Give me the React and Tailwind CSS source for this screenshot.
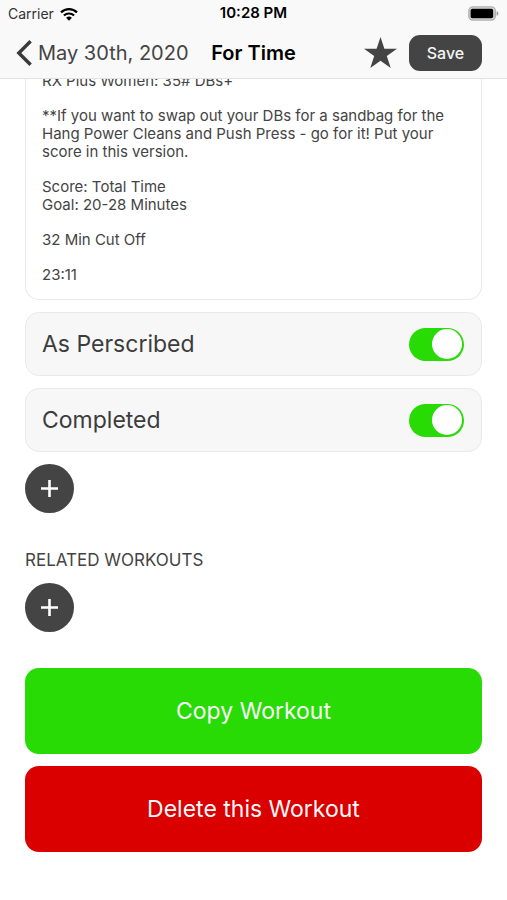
import { useState } from "react";

function WifiIcon() {
  return (
    <svg viewBox="0 0 18 14" className="h-[14px] w-[18px]" fill="none" aria-hidden="true">
      <path d="M1 5.4a11.6 11.6 0 0 1 16 0" stroke="#000" strokeWidth="2.2" />
      <path d="M3.9 8.5a7.4 7.4 0 0 1 10.2 0" stroke="#000" strokeWidth="2.1" />
      <path d="M6.1 10.8a4.2 4.2 0 0 1 5.8 0L9 13.8z" fill="#000" />
    </svg>
  );
}

function BatteryIcon() {
  return (
    <svg viewBox="0 0 31 15" className="h-[15px] w-[31px]" aria-hidden="true">
      <rect x="0.9" y="0.9" width="26.4" height="13.2" rx="4" fill="#d8d8d8" stroke="#b0b0b0" strokeWidth="1.4" />
      <rect x="2.6" y="2.8" width="22.6" height="9.4" rx="1.8" fill="#000" />
      <path d="M28.6 5.2c1.1.3 1.8 1.2 1.8 2.3s-.7 2-1.8 2.3z" fill="#9a9a9a" />
    </svg>
  );
}

function ToggleRow({ label, checked, onChange }) {
  return (
    <label className="flex h-16 items-center justify-between rounded-[14px] border border-[#e9e9e9] bg-[#f7f7f7] px-4 text-[23px] text-[#3c3c3c]">
      {label}
      <input
        type="checkbox"
        role="switch"
        checked={checked}
        onChange={(e) => onChange(e.target.checked)}
        className="mr-px flex h-[33px] w-[55px] appearance-none items-center rounded-full bg-[#d8d8d8] px-0.5 before:size-[30px] before:rounded-full before:bg-white checked:justify-end checked:bg-[#28db04]"
      />
    </label>
  );
}

function AddButton({ label }) {
  return (
    <button type="button" aria-label={label} className="flex size-[49px] items-center justify-center rounded-full bg-[#444]">
      <svg viewBox="0 0 17 17" className="size-[17px]" stroke="#fff" strokeWidth="2.6" aria-hidden="true">
        <path d="M8.5 0v17M0 8.5h17" />
      </svg>
    </button>
  );
}

const notes = [
  "RX Plus Women: 35# DBs+",
  "**If you want to swap out your DBs for a sandbag for the Hang Power Cleans and Push Press - go for it! Put your score in this version.",
  "Score: Total Time\nGoal: 20-28 Minutes",
  "32 Min Cut Off",
  "23:11",
];

export default function App() {
  const [prescribed, setPrescribed] = useState(true);
  const [completed, setCompleted] = useState(true);

  return (
    <div className="min-h-screen bg-white font-['Inter',sans-serif] text-[#444]">
      <header className="sticky top-0 z-10 border-b border-[#e2e2e2] bg-[#f9f9f9]">
        <div className="grid h-[27px] grid-cols-[1fr_auto_1fr] items-center px-2 text-black">
          <div className="flex items-center gap-1.5 text-sm text-[#333]">
            Carrier
            <WifiIcon />
          </div>
          <span className="text-[15px] font-semibold">10:28 PM</span>
          <div className="flex justify-end">
            <BatteryIcon />
          </div>
        </div>

        <nav className="grid h-[51px] grid-cols-[1fr_auto_1fr] items-center px-4">
          <a href="#workouts" className="flex items-center gap-1.5 text-xl whitespace-nowrap">
            <svg viewBox="0 0 16 26" className="h-[26px] w-4" fill="none" stroke="#3a3a3a" strokeWidth="3.4" aria-hidden="true">
              <path d="M14.6 1.2 2.8 13l11.8 11.8" />
            </svg>
            May 30th, 2020
          </a>
          <h1 className="text-xl font-semibold text-black">For Time</h1>
          <div className="flex items-center justify-end gap-3 pr-[9px]">
            <button type="button" aria-label="Favorite">
              <svg viewBox="0 0 33 31" className="h-[31px] w-[33px]" fill="#444" aria-hidden="true">
                <path d="M16.5 0l3.9 11.8H33l-10.2 7.3L26.7 31l-10.2-7.3L6.3 31l3.9-11.9L0 11.8h12.6z" />
              </svg>
            </button>
            <button type="button" className="h-9 w-[73px] rounded-[11px] bg-[#444] text-base font-medium text-[#f5f5f5]">
              Save
            </button>
          </div>
        </nav>
      </header>

      <main className="px-[25px]">
        {/* the card keeps scrolling up underneath the header */}
        <section className="-mt-2 flex flex-col gap-[17px] rounded-b-[14px] border border-t-0 border-[#e9e9e9] px-4 pt-px pb-[15px] text-[15px] leading-[18px]">
          {notes.map((note) => (
            <p key={note} className="whitespace-pre-line">
              {note}
            </p>
          ))}
        </section>

        <div className="mt-3 flex flex-col gap-3">
          <ToggleRow label="As Perscribed" checked={prescribed} onChange={setPrescribed} />
          <ToggleRow label="Completed" checked={completed} onChange={setCompleted} />
          <AddButton label="Add item" />
        </div>

        <h2 className="mt-9 mb-3 text-[17px] leading-[22px]">RELATED WORKOUTS</h2>
        <AddButton label="Add related workout" />

        <div className="mt-9 flex flex-col gap-3 pb-12 text-[23px] text-[#f8f8f8]">
          <button type="button" className="h-[86px] rounded-[14px] bg-[#28db04]">
            Copy Workout
          </button>
          <button type="button" className="h-[86px] rounded-[14px] bg-[#db0000]">
            Delete this Workout
          </button>
        </div>
      </main>
    </div>
  );
}
